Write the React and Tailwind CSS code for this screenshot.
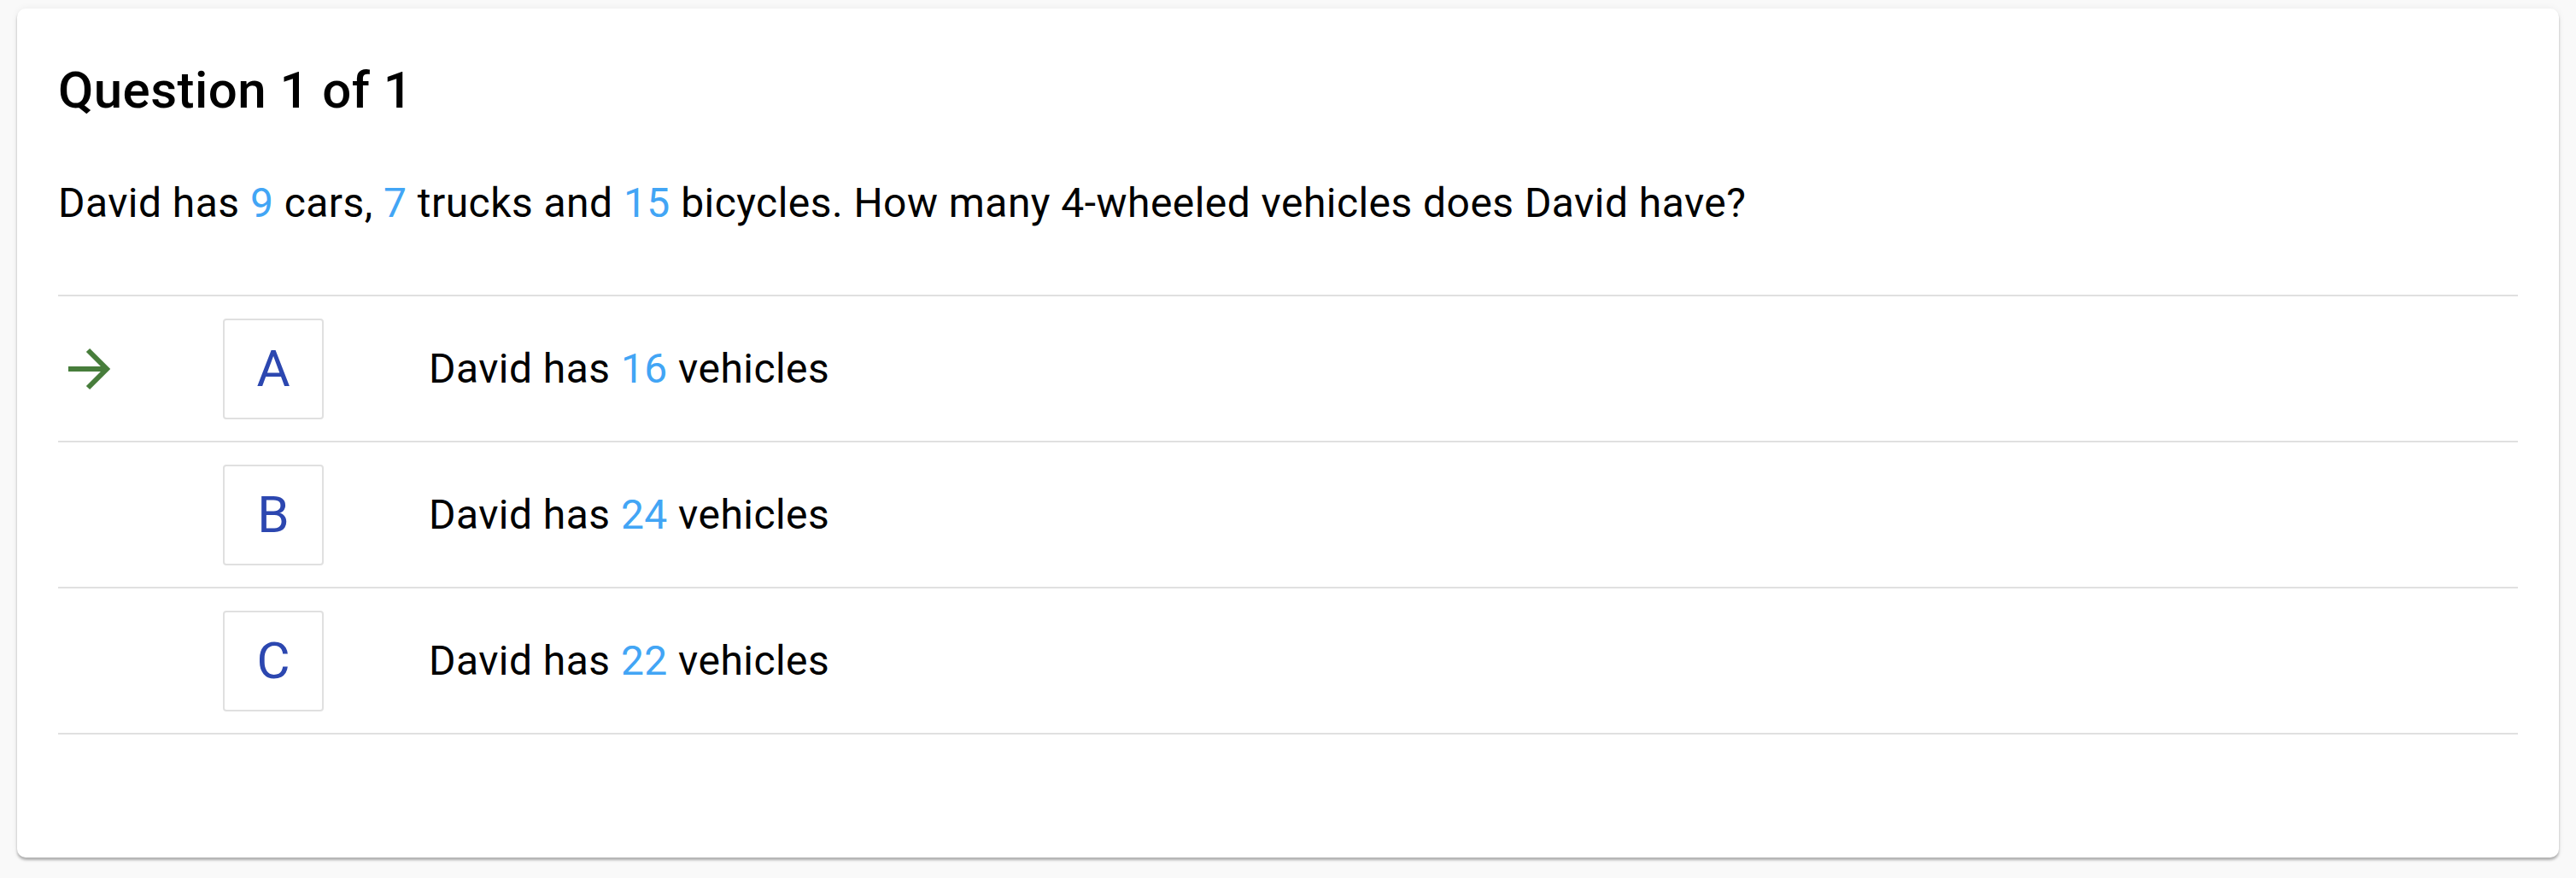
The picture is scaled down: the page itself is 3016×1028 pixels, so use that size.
import React from 'react';

const options = [
  { letter: 'A', count: 16, selected: true },
  { letter: 'B', count: 24, selected: false },
  { letter: 'C', count: 22, selected: false },
];

const Num = ({ children }) => <span className="text-[#42a5f5]">{children}</span>;

const ArrowIcon = () => (
  <svg width="72" height="72" viewBox="0 0 72 72" fill="none">
    <path d="M12 36 H58" stroke="#477d3b" strokeWidth="6" />
    <path d="M35 14 L57 36 L35 58" stroke="#477d3b" strokeWidth="6" strokeLinejoin="miter" />
  </svg>
);

const OptionRow = ({ letter, count, selected }) => (
  <div className="flex items-center h-[171px] border-b-2 border-[#e0e0e0]">
    <div className="w-[72px] h-[72px] flex items-center justify-center">
      {selected && <ArrowIcon />}
    </div>
    <div className="ml-[121px] w-[118px] h-[118px] border-2 border-[#e0e0e0] rounded-[4px] flex items-center justify-center text-[60px] leading-none text-[#2c47b0]">
      {letter}
    </div>
    <p className="ml-[123px] text-[48px] leading-[72px] tracking-[0.45px] text-black">
      David has <Num>{count}</Num> vehicles
    </p>
  </div>
);

const App = () => {
  return (
    <div className="min-h-[1028px] bg-[#f9f9f9] pt-[10px] px-[20px] pb-[23px] font-['Roboto','Liberation_Sans',sans-serif]">
      <div className="bg-white rounded-[10px] shadow-[0_3px_3px_rgba(0,0,0,0.28),0_0_8px_rgba(0,0,0,0.06)] px-[48px] pt-[48px] pb-[144px]">
        <h1 className="text-[60px] leading-[96px] font-medium tracking-[0.45px] text-black">Question 1 of 1</h1>
        <p className="mt-[48px] mb-[71px] text-[48px] leading-[72px] tracking-[0.45px] text-black">
          David has <Num>9</Num> cars, <Num>7</Num> trucks and <Num>15</Num> bicycles. How many 4-wheeled vehicles does David have?
        </p>
        <div className="border-t-2 border-[#e0e0e0]">
          {options.map((o) => (
            <OptionRow key={o.letter} {...o} />
          ))}
        </div>
      </div>
    </div>
  );
};

export default App;
